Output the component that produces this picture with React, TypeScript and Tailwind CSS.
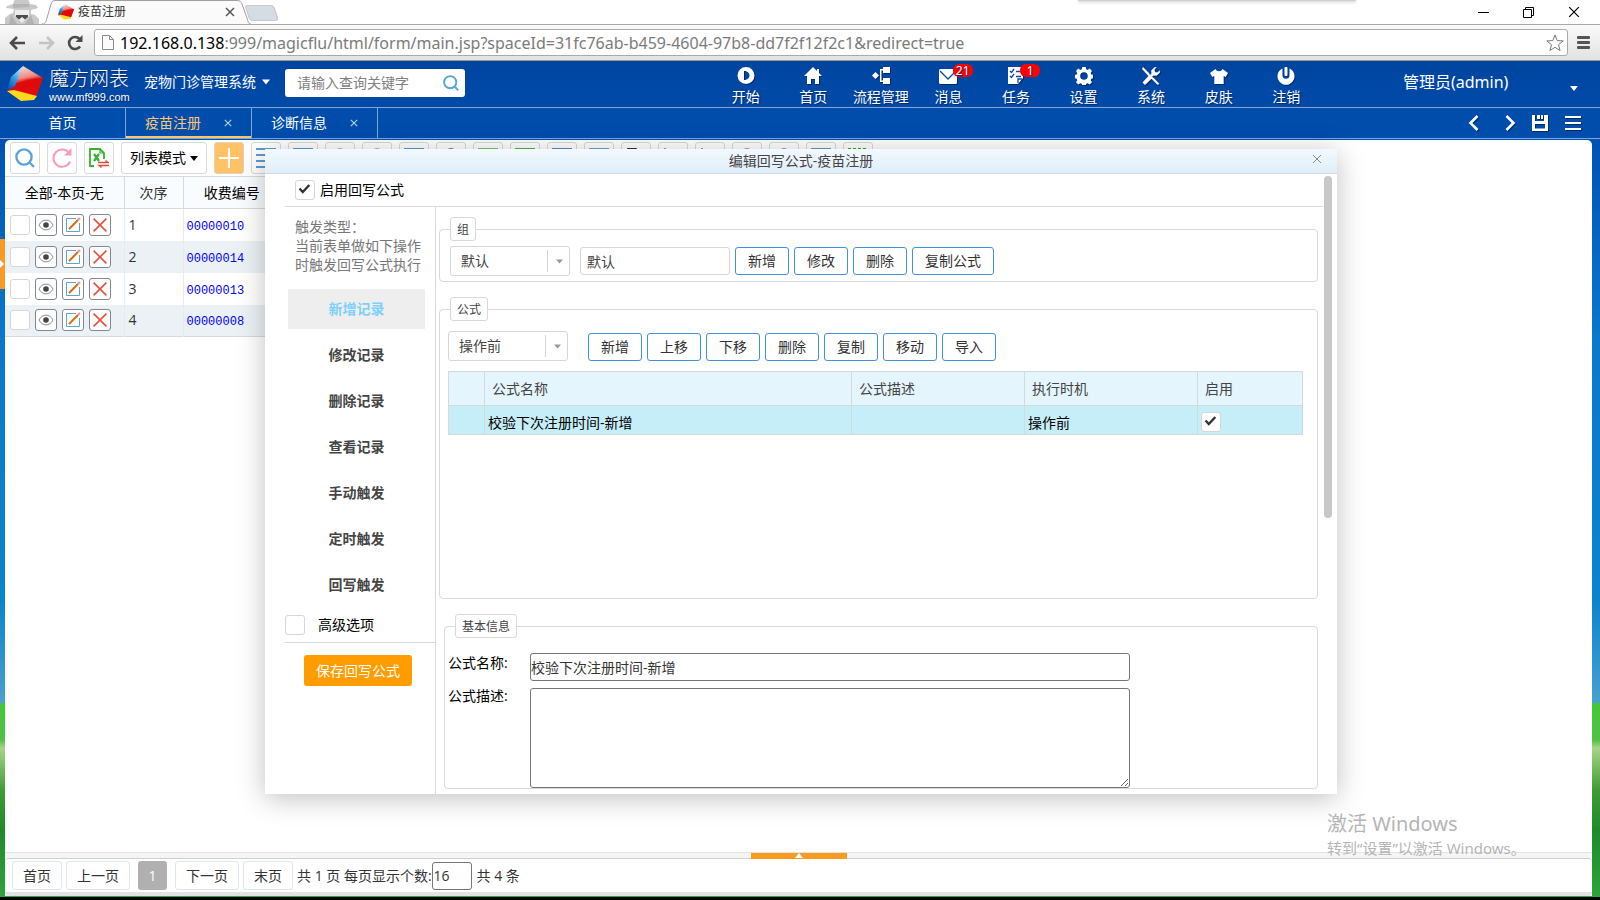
import React from "react";

type IconProps = { className?: string };

const triggers = ["新增记录", "修改记录", "删除记录", "查看记录", "手动触发", "定时触发", "回写触发"];
const records = ["00000010", "00000014", "00000013", "00000008"];
const groupActions = ["新增", "修改", "删除", "复制公式"];
const formulaActions = ["新增", "上移", "下移", "删除", "复制", "移动", "导入"];

const toolIcons = [
  { name: "列表", shape: "wide", color: "#5b9bd5" },
  { name: "表格", shape: "wide", color: "#5b9bd5" },
  { name: "锁定", shape: "arc", color: "#a9b2ba" },
  { name: "解锁", shape: "arc", color: "#a9b2ba" },
  { name: "打印", shape: "wide", color: "#5b9bd5" },
  { name: "统计", shape: "arc", color: "#6b7887" },
  { name: "导入", shape: "wide", color: "#7cc36a" },
  { name: "导出", shape: "wide", color: "#4fb443" },
  { name: "保存", shape: "wide", color: "#5b8fc4" },
  { name: "视图", shape: "wide", color: "#6ba6d2" },
  { name: "标记", shape: "left", color: "#333333" },
  { name: "折线图", shape: "dot", color: "#8797a8" },
  { name: "柱状图", shape: "dot", color: "#8797a8" },
  { name: "上传", shape: "arc", color: "#7d9dc2" },
  { name: "下载", shape: "arc", color: "#7d9dc2" },
  { name: "归档", shape: "wide", color: "#6d93bd" },
  { name: "条码", shape: "dash", color: "#2eae2a" },
];

function CubeLogo({ className }: IconProps) {
  return (
    <svg viewBox="0 0 36 36" className={className} aria-hidden="true">
      <defs>
        <linearGradient id="cubeRed" x1="0.4" y1="0" x2="0.6" y2="1">
          <stop offset="0" stopColor="#fbd9d5" />
          <stop offset="0.35" stopColor="#f08a80" />
          <stop offset="0.5" stopColor="#d80d0d" />
          <stop offset="1" stopColor="#f01212" />
        </linearGradient>
        <linearGradient id="cubeBlue" x1="0.8" y1="0" x2="0.2" y2="1">
          <stop offset="0" stopColor="#d9f1fd" />
          <stop offset="0.5" stopColor="#2f9fe6" />
          <stop offset="1" stopColor="#0a4fb0" />
        </linearGradient>
      </defs>
      <path d="M16 0 4 11 0 25l9-4Z" fill="url(#cubeBlue)" />
      <path d="M16 0 36 12 29 31 6 25Z" fill="url(#cubeRed)" />
      <path d="M11 18Q18 12 36 12L29 31 6 25Z" fill="#e00a0a" opacity="0.75" />
      <path d="M0 25 8 20 6 27Z" fill="#c8102e" />
      <path d="M0 25 7 24 30 30 27 34 14 35Z" fill="#ffd91a" />
    </svg>
  );
}

function Caret({ className }: IconProps) {
  return (
    <svg viewBox="0 0 10 6" className={className} aria-hidden="true">
      <path d="M0 0h10L5 6Z" fill="currentColor" />
    </svg>
  );
}

function Cross({ className }: IconProps) {
  return (
    <svg viewBox="0 0 10 10" className={className} aria-hidden="true" fill="none" stroke="currentColor">
      <path d="M1 1l8 8M9 1 1 9" />
    </svg>
  );
}

function Magnifier({ className }: IconProps) {
  return (
    <svg viewBox="0 0 20 20" className={className} aria-hidden="true" fill="none" stroke="#5ba3d9" strokeWidth="2.400">
      <circle cx="9" cy="9" r="7.6" />
      <path d="m14.5 14.5 4.5 4.5" />
    </svg>
  );
}

function CheckBox({ label, checked, className }: { label: string; checked?: boolean; className?: string }) {
  return (
    <span className={`relative inline-flex h-5 w-5 shrink-0 ${className ?? ""}`}>
      <input
        type="checkbox"
        aria-label={label}
        defaultChecked={checked}
        className="peer h-5 w-5 appearance-none rounded-[3px] border border-[#d6d6d6] bg-white"
      />
      <svg
        viewBox="0 0 20 20"
        className="pointer-events-none absolute inset-0 hidden h-5 w-5 peer-checked:block"
        fill="none"
        stroke="#333"
        strokeWidth="2.4"
      >
        <path d="m4.5 8.5 3.3 3.5 6.5-7" />
      </svg>
    </span>
  );
}

const navItems: { label: string; badge?: string; icon: React.ReactNode }[] = [
  {
    label: "开始",
    icon: <path fillRule="evenodd" d="M9 0a8.500 8.500 0 1 0 0 17A8.500 8.500 0 1 0 9 0ZM7 4c4 0 5.500 2.500 5.500 4.500S11 13 7 13Z" />,
  },
  { label: "首页", icon: <path d="M9 0 0 9h3v8h4v-5h4v5h4V9h3l-3-3V2h-2v2Z" /> },
  {
    label: "流程管理",
    icon: <path d="m0 8.500 3.500-3.500L7 8.500 3.500 12ZM8 2h3V0h7v6h-7V3.500H9.500v10H11V11h7v6h-7v-2H8Z" />,
  },
  {
    label: "消息",
    badge: "21",
    icon: (
      <>
        <rect x="0" y="2" width="18" height="15" rx="1.500" />
        <path d="m1 4 8 8 8-8" fill="none" stroke="#0b4aa3" strokeWidth="1.300" />
      </>
    ),
  },
  {
    label: "任务",
    badge: "1",
    icon: (
      <>
        <path d="M1 0h15v11l-5 6H1Z" />
        <path d="m3 4 1.500 1.500L7 2M3 9l1.500 1.500L7 7M9 4.500h5M9 9.500h5M11 16v-4h4" fill="none" stroke="#0b4aa3" strokeWidth="1.300" />
      </>
    ),
  },
  {
    label: "设置",
    icon: (
      <path
        fillRule="evenodd"
        d="M7.300 0h3.400l.5 2.300 1.500.6 2-1.300 2.300 2.400-1.300 2 .6 1.500 2.200.4v3.300l-2.200.5-.6 1.500 1.300 2-2.300 2.300-2-1.300-1.500.6-.5 2.200H7.300l-.5-2.200-1.500-.6-2 1.300L1 15.200l1.300-2-.6-1.500-1.700-.5V7.900l1.700-.4.6-1.500L1 4l2.300-2.400 2 1.300 1.500-.6ZM9 5.200a3.800 3.800 0 1 0 0 7.600 3.800 3.800 0 0 0 0-7.600Z"
      />
    ),
  },
  {
    label: "系统",
    icon: (
      <path d="m1 0 6 6 1 2 1.500-1.500-.3-3L12.500.2l2.300-.2-2.300 2.800.5 2.200 2.200.5L18 3.200l-.2 2.600-3.300 3-3-.2L10 10l1.500.8L17.500 17l-2 .8-6-6L3 18l-2.500-2.500L6.500 9 5 7.500 0 2Z" />
    ),
  },
  { label: "皮肤", icon: <path d="m5.500 2-5.500 4 2.300 4 2-1v8h9.400V9l2 1L18 6l-5.500-4C11.500 5 6.500 5 5.500 2Z" /> },
  {
    label: "注销",
    icon: (
      <>
        <path d="M5.500 1.500a8.500 8.500 0 1 0 7 0v6.800a3.500 3.500 0 0 1-7 0Z" />
        <rect x="7.500" y="0" width="3" height="9" rx="1" />
      </>
    ),
  },
];

function BrowserChrome() {
  return (
    <div className="font-[Open_Sans,Noto_Sans_CJK_SC,sans-serif]">
      <div className="flex h-6 items-stretch bg-white">
        <svg viewBox="0 0 42 24" className="h-6 w-[42px]" aria-hidden="true">
          <path d="M5 24v-6l5-4 3-1 1-4-8-1 1-2 6-2 2-5h13l2 5 6 1 2 3-7 2v4l4 1 4 4v5Z" fill="#c9c9c9" />
          <path d="M13 4h16l1 3-17 1Z" fill="#b5b5b5" />
          <path d="M15 10h14v6l-7 7-7-7Z" fill="#ececec" />
          <path d="M16 15h12v2l-3 2.500-3-2.500-3 2.500-3-2.500Z" fill="#4c4c4c" />
          <path d="m11 15 6 9h-8ZM31 15l-6 9h9Z" fill="#b1b1b1" />
        </svg>
        <div className="relative flex w-[209px] items-center pl-4 pr-4">
          <svg viewBox="0 0 209 24" className="absolute inset-0 h-6 w-full" aria-hidden="true">
            <path d="M0 24c4 0 4-3 5-6l4-14c1-3 2-3.500 4-3.500h182c3 0 4 1 5 3.500l5 14c1 3 1 6 4 6" fill="#fafafa" stroke="#a0a0a0" />
          </svg>
          <CubeLogo className="relative h-4 w-4" />
          <span className="relative ml-1 flex-1 text-xs text-[#333]">疫苗注册</span>
          <button aria-label="关闭标签页" className="relative text-[#555]">
            <Cross className="h-[10px] w-[10px] stroke-[1.5]" />
          </button>
        </div>
        <svg viewBox="0 0 28 16" className="-ml-[6px] mt-[5px] h-4 w-[33px]" preserveAspectRatio="none" aria-hidden="true">
          <path d="M2 .5h20c2 0 2 1 3 3l2.500 9c.5 2 0 3-2 3H7c-2 0-3-1-3.500-3L.7 3C.4 1.500.5.5 2 .5Z" fill="#d5dce4" stroke="#c4cbd3" />
        </svg>
        <div className="ml-auto mr-[122px] h-[1px] w-[278px] bg-[#cfcfcf] shadow-[0_1px_3px_#aaa] max-lg:hidden" />
        <div className="flex items-center gap-[34px] pr-5 text-black">
          <button aria-label="最小化">
            <svg viewBox="0 0 11 11" className="h-[11px] w-[11px]" stroke="currentColor">
              <path d="M0 5.500h11" />
            </svg>
          </button>
          <button aria-label="还原">
            <svg viewBox="0 0 11 11" className="h-[11px] w-[11px]" fill="none" stroke="currentColor">
              <path d="M.5 2.500h8v8h-8ZM2.500 2.500v-2h8v8h-2" />
            </svg>
          </button>
          <button aria-label="关闭">
            <Cross className="h-3 w-3" />
          </button>
        </div>
      </div>
      <div className="flex h-[37px] items-center border-b border-t border-b-[#9a9a9a] border-t-[#a8a8a8] bg-gradient-to-b from-[#fafafa] to-[#e2e2e2] pl-[9px] pr-[10px]">
        <button aria-label="后退">
          <svg viewBox="0 0 16 14" className="h-[14px] w-4" fill="none" stroke="#4a4a4a" strokeWidth="2.600">
            <path d="M16 7H2M8 1 2 7l6 6" />
          </svg>
        </button>
        <button aria-label="前进" className="ml-[14px]">
          <svg viewBox="0 0 16 14" className="h-[14px] w-4" fill="none" stroke="#c4c4c4" strokeWidth="2.600">
            <path d="M0 7h14M8 1l6 6-6 6" />
          </svg>
        </button>
        <button aria-label="重新加载" className="ml-[12px]">
          <svg viewBox="0 0 16 16" className="h-4 w-4" fill="none" stroke="#4a4a4a" strokeWidth="2.600">
            <path d="M13 11.500A6 6 0 1 1 12.500 4" />
            <path d="M15.500 0v7H8.500Z" fill="#4a4a4a" stroke="none" />
          </svg>
        </button>
        <div className="ml-[11px] flex h-[27px] flex-1 items-center rounded-[3px] border border-[#aaa] bg-white pl-[7px] pr-[3px]">
          <svg viewBox="0 0 12 15" className="h-[15px] w-3" fill="#fbfbfb" stroke="#8a8a8a">
            <path d="M.5.5h7l4 4v10H.5ZM7.500.5v4h4" />
          </svg>
          <div className="ml-[6px] flex-1 whitespace-nowrap font-[Noto_Sans,sans-serif] text-base leading-6 text-[#7b7b7b]">
            <span className="text-black">192.168.0.138</span>
            :999/magicflu/html/form/main.jsp?spaceId=31fc76ab-b459-4604-97b8-dd7f2f12f2c1&amp;redirect=true
          </div>
          <button aria-label="加入书签">
            <svg viewBox="0 0 18 18" className="h-[18px] w-[18px]" fill="white" stroke="#777">
              <path d="m9 1 2.200 5.600 6 .3-4.700 3.800 1.600 5.900L9 13.300l-5.100 3.300 1.600-5.900L.8 6.900l6-.3Z" />
            </svg>
          </button>
        </div>
        <button aria-label="菜单" className="ml-[9px]">
          <svg viewBox="0 0 13 13" className="h-[13px] w-[13px]" fill="#555">
            <rect width="13" height="3" rx="1" />
            <rect y="5" width="13" height="3" rx="1" />
            <rect y="10" width="13" height="3" rx="1" />
          </svg>
        </button>
      </div>
    </div>
  );
}

function AppHeader() {
  return (
    <header className="flex h-[47px] items-stretch border-b border-[#7ea5d6] bg-gradient-to-b from-[#00459f] to-[#004aa9] text-white">
      <a href="#home" className="flex items-center pl-[6px]">
        <CubeLogo className="h-9 w-[38px]" />
        <span className="ml-[5px] flex w-20 flex-col pt-[2px] [text-shadow:1px_1px_1px_#012b66]">
          <span className="text-xl font-light leading-6">魔方网表</span>
          <span className="font-[Liberation_Sans,sans-serif] text-[11px] leading-3">www.mf999.com</span>
        </span>
      </a>
      <button className="ml-[15px] mb-1 flex items-center gap-[6px] text-sm">
        宠物门诊管理系统
        <Caret className="h-[6px] w-2" />
      </button>
      <div className="ml-[15px] mt-2 flex h-7 w-[180px] items-center rounded-[3px] bg-white pl-3 pr-[6px]">
        <input
          aria-label="查询"
          placeholder="请输入查询关键字"
          className="min-w-0 flex-1 text-sm text-black outline-none placeholder:text-[#808080]"
        />
        <button aria-label="搜索">
          <Magnifier className="h-4 w-4" />
        </button>
      </div>
      <nav className="ml-auto grid w-[608px] grid-cols-9 [text-shadow:1px_1px_1px_#012b66]">
        {navItems.map((n) => (
          <a key={n.label} href={"#" + n.label} className="relative flex flex-col items-center whitespace-nowrap pt-[6px]">
            <svg viewBox="0 0 18 18" className="h-[18px] w-[18px] fill-white drop-shadow-[1px_1px_0_#012b66]" aria-hidden="true">
              {n.icon}
            </svg>
            <span className="mt-[2px] text-sm leading-5">{n.label}</span>
            {n.badge && (
              <span className="absolute left-[38px] top-[3px] flex h-[13px] w-5 items-center justify-center rounded-[6px] bg-[#f00] font-[Noto_Sans,sans-serif] text-xs">
                {n.badge}
              </span>
            )}
          </a>
        ))}
      </nav>
      <button className="ml-[83px] mb-[4px] mr-[22px] flex w-[175px] items-center justify-between font-[Noto_Sans,Noto_Sans_CJK_SC,sans-serif] text-base">
        管理员(admin)
        <Caret className="mt-3 h-[5px] w-2" />
      </button>
    </header>
  );
}

function TabBar() {
  return (
    <div className="flex h-[31px] items-stretch border-b border-[#7ea5d6] bg-[#004dac] text-sm text-white">
      <a href="#main" className="flex w-[126px] items-center justify-center border-r border-[#7ea5d6]">
        首页
      </a>
      <div className="flex w-[126px] items-center border-r border-[#7ea5d6] pl-[19px] text-[#ffc66b] shadow-[inset_0_-2px_0_#ffc66b]">
        <a href="#vaccine">疫苗注册</a>
        <button aria-label="关闭疫苗注册" className="ml-[23px] text-[#b5cdea]">
          <Cross className="h-2 w-2 stroke-[1.5]" />
        </button>
      </div>
      <div className="flex w-[126px] items-center border-r border-[#7ea5d6] pl-[19px]">
        <a href="#diagnosis">诊断信息</a>
        <button aria-label="关闭诊断信息" className="ml-[23px] text-[#b5cdea]">
          <Cross className="h-2 w-2 stroke-[1.5]" />
        </button>
      </div>
      <div className="ml-auto flex items-center pr-[19px] [&_svg]:drop-shadow-[1px_1px_0_#012b66]">
        <button aria-label="向左">
          <svg viewBox="0 0 11 16" className="h-4 w-[11px]" fill="none" stroke="white" strokeWidth="2.600">
            <path d="m9.500 1-7 7 7 7" />
          </svg>
        </button>
        <button aria-label="向右" className="ml-[26px]">
          <svg viewBox="0 0 11 16" className="h-4 w-[11px]" fill="none" stroke="white" strokeWidth="2.600">
            <path d="m1.500 1 7 7-7 7" />
          </svg>
        </button>
        <button aria-label="保存布局" className="ml-4">
          <svg viewBox="0 0 16 16" className="h-4 w-4" fill="white" fillRule="evenodd">
            <path d="M0 0h3v6h9V0h4v16H0ZM3 9v4.500h10V9ZM5 0h3v4H5ZM9 0h2v4H9Z" />
          </svg>
        </button>
        <button aria-label="更多" className="ml-[17px]">
          <svg viewBox="0 0 16 16" className="h-4 w-4" fill="white">
            <path d="M0 1h16v2H0ZM0 7h16v2H0ZM0 13h16v2H0Z" />
          </svg>
        </button>
      </div>
    </div>
  );
}

function ToolGlyph({ shape, color }: { shape: string; color: string }) {
  return (
    <svg viewBox="0 0 20 20" className="h-5 w-5" fill="none" stroke={color} strokeWidth="1.800" aria-hidden="true">
      {shape === "wide" && <path d="M0 1h20M0 7h20M0 13h20M0 19h12" />}
      {shape === "arc" && <path d="M5 10V6a5 5 0 0 1 10 0v4M3 10h14v9H3Z" />}
      {shape === "left" && <path d="M2 1h8l6 6v12H2Z" />}
      {shape === "dot" && <path d="M2 0v19h17M5 14l5-5 4 3 5-6" />}
      {shape === "dash" && <path d="M0 1h20M0 5h20M0 9h20" strokeDasharray="3 2" />}
    </svg>
  );
}

const toolButton = "flex h-8 w-[30px] shrink-0 items-center justify-center rounded-[3px] border border-[#d9d9d9] bg-white";

function Toolbar() {
  return (
    <div className="flex items-start gap-[7px] overflow-hidden pb-[2px] pl-[5px] pt-[2px]">
      <button aria-label="查询记录" className={toolButton}>
        <Magnifier className="h-5 w-5" />
      </button>
      <button aria-label="刷新" className={toolButton}>
        <svg viewBox="0 0 20 20" className="h-5 w-5" fill="none" stroke="#fb9bb6" strokeWidth="2">
          <path d="M18 13.500A8.600 8.600 0 1 1 17 5" />
          <path d="M19.500 0v7.500H12Z" fill="#fb9bb6" stroke="none" />
        </svg>
      </button>
      <button aria-label="导出表格" className={toolButton}>
        <svg viewBox="0 0 20 20" className="h-5 w-5" fill="none" stroke="#35b32c" strokeWidth="1.800">
          <path d="M5 18H1V1h10l4 4v6" />
          <path d="M11 1v4h4" strokeWidth="1.200" />
          <path d="m5 6 5 7M10 6l-5 7" strokeWidth="2.200" />
          <path d="M9 14.500h10l-2.500-2M20 17.500H10l2.500 2" stroke="#e0483c" strokeWidth="1.300" />
        </svg>
      </button>
      <button className="flex h-8 w-[86px] shrink-0 items-center justify-center gap-1 rounded-[3px] border border-[#d9d9d9] bg-white text-sm text-black">
        列表模式
        <Caret className="h-[5px] w-2" />
      </button>
      <button aria-label="新增" className="flex h-8 w-[30px] shrink-0 items-center justify-center rounded-[3px] border border-[#e5d3b8] bg-[#ffc267]">
        <svg viewBox="0 0 20 20" className="h-5 w-5" stroke="white" strokeWidth="2">
          <path d="M10 0v20M0 10h20" />
        </svg>
      </button>
      {toolIcons.map((t) => (
        <button key={t.name} aria-label={t.name} className={toolButton}>
          <ToolGlyph shape={t.shape} color={t.color} />
        </button>
      ))}
    </div>
  );
}

const rowButton = "flex h-[22px] w-[22px] items-center justify-center rounded-[3px] border border-[#7f8893] bg-white";

function RecordTable() {
  return (
    <table className="w-[275px] table-fixed border-collapse text-sm text-[#333]">
      <thead>
        <tr className="h-8 border-y border-[#d9d9d9] bg-[#f8fcff] text-black">
          <th className="w-[119px] border-r border-[#d9d9d9] font-normal">全部-本页-无</th>
          <th className="w-[59px] border-r border-[#d9d9d9] font-normal text-[#333]">次序</th>
          <th className="font-normal">收费编号</th>
        </tr>
      </thead>
      <tbody>
        {records.map((id, i) => (
          <tr key={id} className="h-8 last:border-b last:border-[#d9d9d9] even:bg-[#ebf1f5]">
            <td className="border-r border-[#e0edf9]">
              <div className="flex items-center gap-[5px] pl-[5px]">
                <CheckBox label={"选择 " + id} />
                <button aria-label="查看" className={rowButton}>
                  <svg viewBox="0 0 16 12" className="h-3 w-4" fill="none" stroke="#8a929b">
                    <path d="M1 6c3-6.500 11-6.500 14 0-3 6.500-11 6.500-14 0Z" />
                    <circle cx="8" cy="6" r="2.800" fill="#444" stroke="none" />
                  </svg>
                </button>
                <button aria-label="编辑" className={rowButton}>
                  <svg viewBox="0 0 16 16" className="h-4 w-4" fill="none" stroke="#5ba3d9">
                    <path d="M11 1.500H1.500v13h13V6" />
                    <path d="m4 12 9-9" stroke="#d2700f" strokeWidth="2" />
                    <path d="m13 3 2-2" stroke="#f58ca0" strokeWidth="2" />
                  </svg>
                </button>
                <button aria-label="删除" className={`${rowButton} text-[#e8503f]`}>
                  <Cross className="h-4 w-4" />
                </button>
              </div>
            </td>
            <td className="border-r border-[#e0edf9] pl-1">{i + 1}</td>
            <td className="pl-[3px]">
              <a href={"#" + id} className="font-[Liberation_Mono,monospace] text-xs text-[#00f]">
                {id}
              </a>
            </td>
          </tr>
        ))}
      </tbody>
    </table>
  );
}

const pageButton = "h-[29px] rounded-[3px] border border-[#dbe6f2] bg-white px-[10px]";

function Pager() {
  return (
    <footer className="relative border-t border-[#e3e3e3] bg-[#f5f5f5] pt-[5px]">
      <button aria-label="展开面板" className="absolute left-1/2 top-0 flex h-[6px] w-24 -translate-x-1/2 justify-center bg-[#f79b22]">
        <svg viewBox="0 0 10 5" className="h-[5px] w-[10px]" fill="white">
          <path d="M5 0 9 5H1Z" />
        </svg>
      </button>
      <div className="flex items-start rounded-t-[4px] border-t border-[#cfcfcf] bg-white pb-[2px] pl-[7px] pt-[2px] text-sm text-[#333]">
        <button className={pageButton}>首页</button>
        <button className={`${pageButton} ml-1`}>上一页</button>
        <button className="ml-2 h-[29px] w-[29px] rounded-[3px] bg-[#b0b0b0] text-white">1</button>
        <button className={`${pageButton} ml-2`}>下一页</button>
        <button className={`${pageButton} ml-1`}>末页</button>
        <label className="ml-1 flex items-center leading-[29px]">
          共 1 页 每页显示个数:
          <input defaultValue="16" className="h-7 w-10 rounded-[3px] border border-[#767676] pl-[1px]" />
        </label>
        <span className="ml-[5px] leading-[29px]">共 4 条</span>
      </div>
      <div className="h-1 rounded-b-[5px] bg-[#e2e2e2]" />
    </footer>
  );
}

function Picker({ label, options }: { label: string; options: string[] }) {
  return (
    <div className="relative h-[30px] w-[120px] shrink-0">
      <select aria-label={label} className="h-full w-full appearance-none rounded-[3px] border border-[#d6d6d6] bg-white pl-[10px] text-sm text-[#444]">
        {options.map((o) => (
          <option key={o}>{o}</option>
        ))}
      </select>
      <span className="pointer-events-none absolute bottom-1 right-0 top-1 flex w-[23px] items-center justify-center border-l border-[#d6d6d6] text-[#999]">
        <Caret className="h-[5px] w-[7px]" />
      </span>
    </div>
  );
}

function OutlineButton({ children }: { children: React.ReactNode }) {
  return (
    <button className="h-7 rounded-[3px] border border-[#4390df] bg-white px-3 text-sm leading-[26px] text-[#333]">{children}</button>
  );
}

const legendStyle = "h-6 rounded-[3px] border border-[#d9d9d9] px-[6px] text-xs leading-6 text-[#444]";
const fieldsetStyle = "min-w-0 rounded-[4px] border border-[#d9d9d9]";
const headCell = "border border-[#d3d9dc] pl-[7px] text-left font-normal";
const bodyCell = "border border-[#d3d9dc] pl-[3px]";

function FormulaPanel() {
  return (
    <div className="min-w-0 flex-1 pb-[5px] pl-[3px] pr-[5px] pt-[10px]">
      <fieldset className={`${fieldsetStyle} px-[10px] pb-[5px]`}>
        <legend className={legendStyle}>组</legend>
        <div className="flex items-center gap-[5px] pt-[5px]">
          <Picker label="选择组" options={["默认"]} />
          <input aria-label="组名称" defaultValue="默认" className="ml-[5px] h-7 w-[150px] rounded-[3px] border border-[#d6d6d6] px-[6px] text-sm text-[#444]" />
          {groupActions.map((a) => (
            <OutlineButton key={a}>{a}</OutlineButton>
          ))}
        </div>
      </fieldset>

      <fieldset className={`${fieldsetStyle} mt-[15px] min-h-[302px] pl-2 pr-[14px]`}>
        <legend className={`${legendStyle} ml-[2px]`}>公式</legend>
        <div className="flex items-end gap-[5px] pt-[10px]">
          <Picker label="执行时机" options={["操作前", "操作后"]} />
          <div className="ml-[15px] flex gap-[5px]">
            {formulaActions.map((a) => (
              <OutlineButton key={a}>{a}</OutlineButton>
            ))}
          </div>
        </div>
        <table className="mt-[10px] w-full table-fixed border-collapse text-sm">
          <thead>
            <tr className="h-[34px] bg-[#e4f5fd] text-[#444]">
              <th className={`${headCell} w-9`} />
              <th className={headCell}>公式名称</th>
              <th className={`${headCell} w-[173px]`}>公式描述</th>
              <th className={`${headCell} w-[173px]`}>执行时机</th>
              <th className={`${headCell} w-[105px]`}>启用</th>
            </tr>
          </thead>
          <tbody>
            <tr className="h-[29px] bg-[#c5eef8] text-black">
              <td className={bodyCell} />
              <td className={`${bodyCell} pt-[6px]`}>校验下次注册时间-新增</td>
              <td className={bodyCell} />
              <td className={`${bodyCell} pt-[6px]`}>操作前</td>
              <td className={`${bodyCell} pt-[2px]`}>
                <CheckBox label="启用公式" checked className="align-middle" />
              </td>
            </tr>
          </tbody>
        </table>
      </fieldset>

      <fieldset className={`${fieldsetStyle} ml-[5px] mt-[15px] pl-[3px]`}>
        <legend className={`${legendStyle} ml-[7px]`}>基本信息</legend>
        <div className="grid grid-cols-[82px_600px] gap-y-[7px] pt-[15px] text-sm text-black">
          <label htmlFor="formula-name" className="leading-5">
            公式名称:
          </label>
          <input id="formula-name" defaultValue="校验下次注册时间-新增" className="h-7 rounded-[3px] border border-[#767676] text-[#333]" />
          <label htmlFor="formula-desc" className="leading-4">
            公式描述:
          </label>
          <textarea id="formula-desc" className="block h-[100px] rounded-[3px] border border-[#767676]" />
        </div>
      </fieldset>
    </div>
  );
}

function FormulaDialog() {
  return (
    <section
      role="dialog"
      aria-label="编辑回写公式"
      className="absolute left-[265px] right-[263px] top-[149px] bg-white shadow-[0_4px_26px_rgba(0,0,0,0.25)]"
    >
      <div className="relative flex h-[25px] items-center justify-center border-b border-[#d5d9dc] bg-gradient-to-b from-[#f2f9fe] to-[#e0eef8]">
        <h2 className="text-sm text-[#444]">编辑回写公式-疫苗注册</h2>
        <button aria-label="关闭对话框" className="absolute right-[15px] top-[5px] text-[#888]">
          <Cross className="h-[10px] w-[10px]" />
        </button>
      </div>
      <div className="flex">
        <div className="min-w-0 flex-1 pl-5">
          <label className="flex h-[33px] items-center gap-[5px] border-b border-[#d9d9d9] pl-[10px] text-sm text-black">
            <CheckBox label="启用回写公式" checked />
            启用回写公式
          </label>
          <div className="flex">
            <aside className="w-[151px] shrink-0 border-r border-[#d9d9d9] text-sm">
              <p className="pl-[10px] pt-[10px] leading-[19px] text-[#777]">
                触发类型：
                <br />
                当前表单做如下操作
                <br />
                时触发回写公式执行
              </p>
              <ul className="ml-[3px] mr-[10px] mt-[15px] flex flex-col gap-[6px]">
                {triggers.map((t, i) => (
                  <li key={t}>
                    <button className={i === 0 ? "h-10 w-full bg-[#eee] font-bold text-[#7dd0fb]" : "h-10 w-full font-bold text-[#444]"}>{t}</button>
                  </li>
                ))}
              </ul>
              <label className="mt-[10px] flex h-7 items-start gap-[13px] border-b border-[#d9d9d9] text-black">
                <CheckBox label="高级选项" />
                高级选项
              </label>
              <button className="ml-[19px] mt-3 h-[31px] w-[108px] rounded-[3px] bg-[#ff9c00] text-white">保存回写公式</button>
            </aside>
            <FormulaPanel />
          </div>
        </div>
        <div className="w-[14px] pl-[1px] pt-[2px]">
          <div className="h-[342px] w-2 rounded-full bg-[#c8c8c8]" />
        </div>
      </div>
    </section>
  );
}

export default function App() {
  return (
    <div className="relative flex min-h-screen flex-col border-b-[3px] border-black bg-[linear-gradient(#0048a6_0px,#0052b2_140px,#0a78cc_340px,#0a84cc_600px,#4aa0d0_702px,#43c838_704px,#52c045_740px,#a9d48a_748px,#3f9c33_790px,#1f8a2a_830px,#2fa43c_900px)] font-[Open_Sans,Noto_Sans_CJK_SC,sans-serif]">
      <BrowserChrome />
      <AppHeader />
      <TabBar />
      <div className="flex flex-1 pb-[1px] pr-2 pt-[1px]">
        <div className="w-[5px] shrink-0 pt-[99px]">
          <button aria-label="展开侧栏" className="flex h-[50px] w-[5px] items-center bg-[#f79b22]">
            <svg viewBox="0 0 5 8" className="h-2 w-[5px]" fill="white">
              <path d="m0 0 4 4-4 4Z" />
            </svg>
          </button>
        </div>
        <main className="flex min-w-0 flex-1 flex-col rounded-t-[5px] rounded-b-[5px] bg-white">
          <Toolbar />
          <RecordTable />
          <div className="flex-1" />
          <Pager />
        </main>
      </div>
      <FormulaDialog />
      <div className="pointer-events-none absolute bottom-[39px] right-[76px] w-[197px] whitespace-nowrap font-[Noto_Sans,Noto_Sans_CJK_SC,sans-serif] text-[#b5b5b5]">
        <p className="text-xl leading-7">激活 Windows</p>
        <p className="text-[15px] leading-5">转到“设置”以激活 Windows。</p>
      </div>
    </div>
  );
}
